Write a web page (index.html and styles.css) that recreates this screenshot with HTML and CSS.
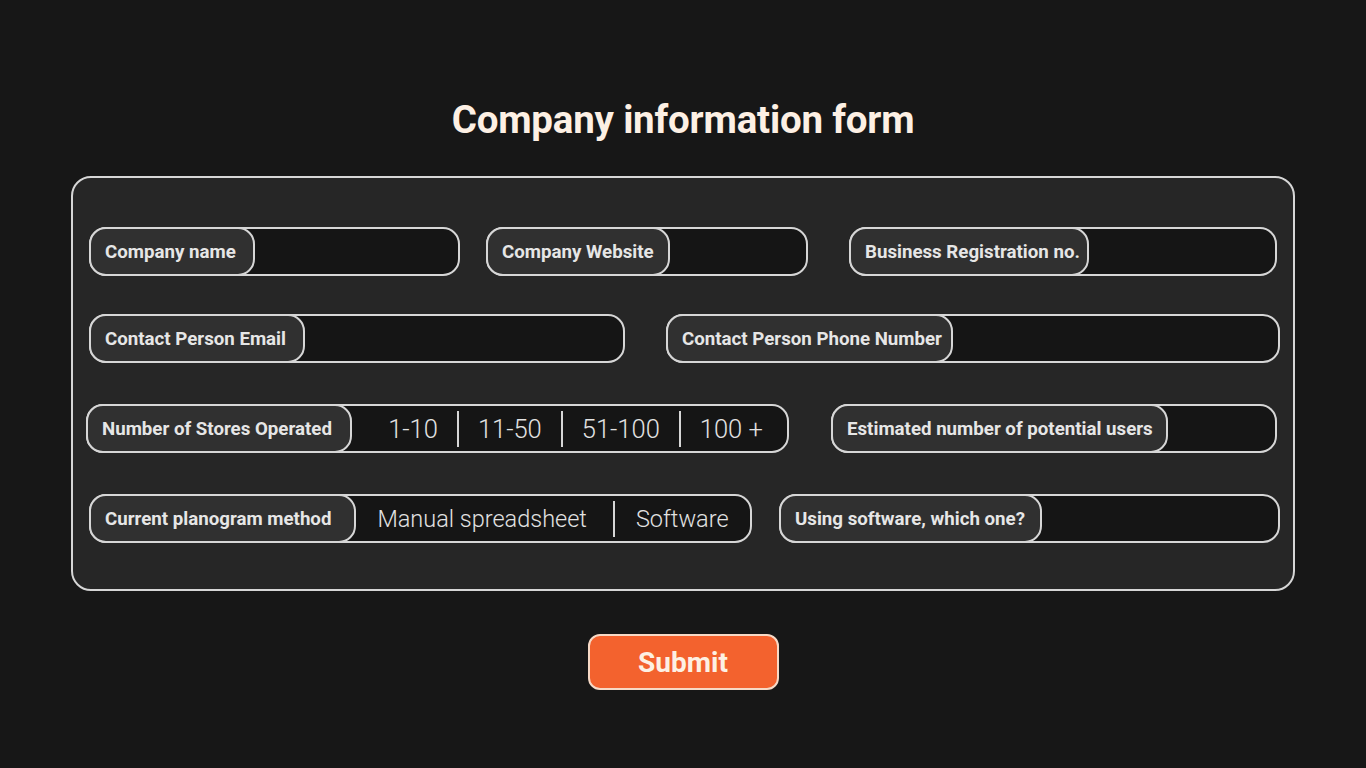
FILE: index.html
```html
<!DOCTYPE html>
<html lang="en">
<head>
<meta charset="utf-8">
<title>Company information form</title>
<link rel="stylesheet" href="styles.css">
</head>
<body>
<main class="page">
  <h1 class="title">Company information form</h1>
  <form class="card">
    <div class="row row-1">
      <div class="field f-name"><span class="label l-name">Company name</span><span class="input"></span></div>
      <div class="field f-web"><span class="label l-web">Company Website</span><span class="input"></span></div>
      <div class="field f-reg"><span class="label l-reg">Business Registration no.</span><span class="input"></span></div>
    </div>
    <div class="row row-2">
      <div class="field f-email"><span class="label l-email">Contact Person Email</span><span class="input"></span></div>
      <div class="field f-phone"><span class="label l-phone">Contact Person Phone Number</span><span class="input"></span></div>
    </div>
    <div class="row row-3">
      <div class="field f-stores">
        <span class="label l-stores">Number of Stores Operated</span>
        <span class="options opts-stores">
          <span class="opt">1-10</span><span class="sep"></span>
          <span class="opt">11-50</span><span class="sep"></span>
          <span class="opt">51-100</span><span class="sep"></span>
          <span class="opt">100 +</span>
        </span>
      </div>
      <div class="field f-users"><span class="label l-users">Estimated number of potential users</span><span class="input"></span></div>
    </div>
    <div class="row row-4">
      <div class="field f-method">
        <span class="label l-method">Current planogram method</span>
        <span class="options opts-method">
          <span class="opt opt-left">Manual spreadsheet</span><span class="sep"></span>
          <span class="opt opt-right">Software</span>
        </span>
      </div>
      <div class="field f-soft"><span class="label l-soft">Using software, which one?</span><span class="input"></span></div>
    </div>
  </form>
  <div class="actions">
    <button class="submit" type="button">Submit</button>
  </div>
</main>
</body>
</html>
```
FILE: styles.css
```css
* { box-sizing: border-box; }

html, body {
  margin: 0;
  padding: 0;
  background: #171717;
}

body {
  font-family: Roboto, "Liberation Sans", sans-serif;
  color: #e4e4e4;
  height: 768px;
  overflow: hidden;
}

.page {
  display: flex;
  flex-direction: column;
  align-items: center;
  padding-top: 97px;
}

.title {
  margin: 0;
  font-size: 38.5px;
  line-height: 46px;
  font-weight: 700;
  color: #fdf0e4;
  letter-spacing: -0.2px;
}

.card {
  margin-top: 33px;
  width: 1224px;
  border: 2px solid #d6d6d6;
  border-radius: 20px;
  background: #262626;
  padding: 49px 0 46px 16px;
}

.row {
  display: flex;
  height: 49px;
}

.row-2 { margin-top: 38px; }
.row-3 { margin-top: 41px; margin-left: -3px; }
.row-4 { margin-top: 41px; }

.field {
  display: flex;
  height: 49px;
  border: 2px solid #d6d6d6;
  border-radius: 17px;
  background: #151515;
}

.label {
  display: flex;
  align-items: center;
  flex: none;
  margin: -2px 0 -2px -2px;
  padding: 0 0 0 14px;
  border: 2px solid #d6d6d6;
  border-radius: 17px;
  background: #303030;
  font-size: 18.7px;
  font-weight: 700;
  color: #e6e6e6;
  white-space: nowrap;
}

.input { flex: 1; }

.f-name { width: 371px; }
.f-web { width: 322px; margin-left: 26px; }
.f-reg { width: 428px; margin-left: 41px; }
.f-email { width: 536px; }
.f-phone { width: 614px; margin-left: 41px; }
.f-stores { width: 703px; }
.f-users { width: 446px; margin-left: 42px; }
.f-method { width: 663px; }
.f-soft { width: 501px; margin-left: 27px; }

.l-name { width: 166px; }
.l-web { width: 184px; }
.l-reg { width: 240px; }
.l-email { width: 216px; }
.l-phone { width: 287px; }
.l-stores { width: 266px; }
.l-users { width: 337px; }
.l-method { width: 267px; }
.l-soft { width: 263px; }

.options {
  flex: 1;
  display: flex;
  align-items: center;
  justify-content: center;
}

.opts-stores { padding-left: 12px; }

.opt {
  font-size: 25.5px;
  font-weight: 300;
  color: #e2e2e2;
  padding: 0 19px;
  white-space: nowrap;
}

.opts-method .opt { font-size: 23.5px; }
.opts-method .opt-left { padding: 0 26px 0 0; }
.opts-method .opt-right { padding: 0 0 0 21px; }

.sep {
  width: 2px;
  height: 36px;
  background: #d6d6d6;
}

.actions {
  margin-top: 43px;
}

.submit {
  width: 191px;
  height: 56px;
  border: 2px solid #f6d9c6;
  border-radius: 12px;
  background: #f3622e;
  color: #fdf0e4;
  font-family: Roboto, "Liberation Sans", sans-serif;
  font-size: 28px;
  font-weight: 700;
  padding: 0;
}
```
